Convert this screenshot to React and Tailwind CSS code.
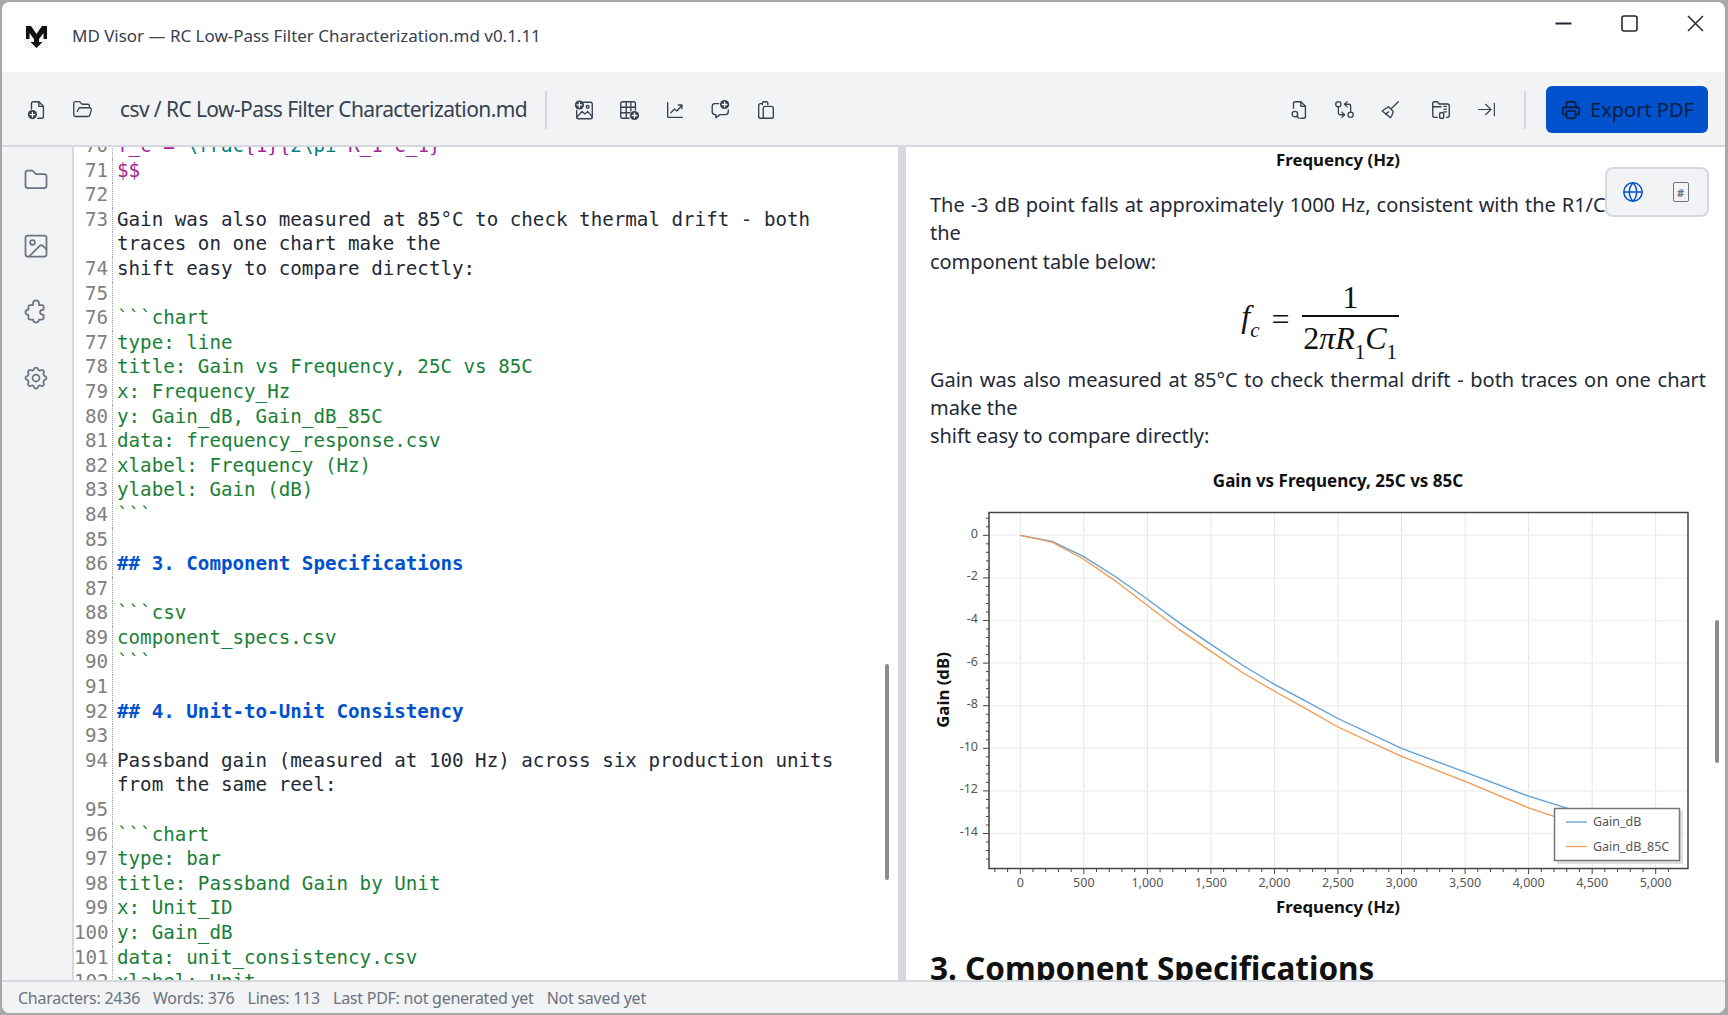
import { ArrowRightToLine, FolderOpen, GitCompareArrows, Globe, Image } from "lucide-react";
import { TbFolder, TbPrinter, TbSettings } from "react-icons/tb";

const svgProps = {
    viewBox: "0 0 24 24",
    fill: "none",
    stroke: "currentColor",
    strokeWidth: 1.5,
    strokeLinecap: "round",
    strokeLinejoin: "round",
    className: "size-[22px]",
};

// filled circle with a white plus, used on several toolbar icons
function PlusBadge({ cx, cy }) {
    return (
        <>
            <circle cx={cx} cy={cy} r="5" fill="currentColor" stroke="none" />
            <path d={`M${cx - 2.5} ${cy}h5M${cx} ${cy - 2.5}v5`} stroke="#fff" strokeWidth="1.4" />
        </>
    );
}

function NewFileIcon() {
    return (
        <svg {...svgProps}>
            <path d="M6 11V5a2 2 0 0 1 2-2h6l5 5v11a2 2 0 0 1-2 2h-4" />
            <path d="M14 3v5h5" />
            <PlusBadge cx={7} cy={17} />
        </svg>
    );
}

function ImagePlusIcon() {
    return (
        <svg {...svgProps}>
            <path d="M11 3.5h8a2 2 0 0 1 2 2v14a2 2 0 0 1-2 2H6a2 2 0 0 1-2-2v-7" />
            <path d="M4 20l6-6.5 3 3 0 0 3-3 5 6" />
            <circle cx="16" cy="8.5" r="1.6" />
            <PlusBadge cx={7} cy={6.5} />
        </svg>
    );
}

function TablePlusIcon() {
    return (
        <svg {...svgProps}>
            <path d="M12 21H5a2 2 0 0 1-2-2V5a2 2 0 0 1 2-2h12a2 2 0 0 1 2 2v7" />
            <path d="M3 9h16M3 15h10M9 3v18M14 3v10" />
            <PlusBadge cx={18} cy={18} />
        </svg>
    );
}

function ChartUpIcon() {
    return (
        <svg {...svgProps}>
            <path d="M4 4v15a1 1 0 0 0 1 1h15" />
            <path d="M7.5 15l4-4 2.5 2 5.5-6" />
            <path d="M15.5 6.5h4v4" />
        </svg>
    );
}

function MessagePlusIcon() {
    return (
        <svg {...svgProps}>
            <path d="M10.5 5H6.5a3 3 0 0 0-3 3v6a3 3 0 0 0 3 3h1v3.5l4.5-3.500h6a3 3 0 0 0 3-3v-2" />
            <PlusBadge cx={17} cy={6} />
        </svg>
    );
}

function ClipboardIcon() {
    return (
        <svg {...svgProps}>
            <path d="M8 5H6a2 2 0 0 0-2 2v12a2 2 0 0 0 2 2h3" />
            <path d="M8 6V4.500A1.500 1.500 0 0 1 9.500 3h3A1.500 1.500 0 0 1 14 4.500V6" />
            <rect x="9" y="8" width="11" height="13" rx="2" />
        </svg>
    );
}

function FileSearchIcon() {
    return (
        <svg {...svgProps}>
            <path d="M6 10V5a2 2 0 0 1 2-2h6l5 5v11a2 2 0 0 1-2 2h-3" />
            <path d="M14 3v5h5" />
            <circle cx="7.500" cy="16.500" r="3" />
            <path d="M10 19l2 2" />
        </svg>
    );
}

function BroomIcon() {
    return (
        <svg {...svgProps}>
            <path d="M21 3l-7.500 7.500" />
            <path d="M10.500 8.500l5 5c-.5 2.500-1.500 5-3 7L3.500 13c2.500-2 5-3.500 7-4.500z" />
            <path d="M7.500 16.500l3-2.500" />
        </svg>
    );
}

function FolderZipIcon() {
    return (
        <svg {...svgProps}>
            <path d="M8 20H5a2 2 0 0 1-2-2V5a2 2 0 0 1 2-2h3l2 2.500h9a2 2 0 0 1 2 2V18a2 2 0 0 1-2 2h-1" />
            <path d="M3 8.500h9" />
            <path d="M15 8h3M15 11h3M15 14h3" strokeWidth="1.200" />
            <rect x="10.500" y="15" width="4.500" height="6" rx="1" />
        </svg>
    );
}

function PuzzleIcon() {
    return (
        <svg {...svgProps} className="size-[28px]">
            <path d="M12 2a2.500 2.500 0 0 1 2.500 2.500V6H17a1.500 1.500 0 0 1 1.500 1.500V10c-2 0-3 .8-3 2.200s1 2.200 3 2.200V17a1.500 1.500 0 0 1-1.500 1.500h-2.500a2.500 2.500 0 0 1-5 0H7A1.500 1.500 0 0 1 5.500 17v-2.500c-1.500 0-2.500-1-2.500-2.200S4 10 5.500 10V7.500A1.500 1.500 0 0 1 7 6h2.500V4.500A2.500 2.500 0 0 1 12 2z" />
        </svg>
    );
}

function Logo() {
    return (
        <svg viewBox="0 0 23 23" className="size-[23px] bg-[#f4f4f4]">
            <path d="M1 1h5l5.500 8L17 1h5v13h-3.500V8L14 14v3h3.500l-6 6-6-6H9v-3L4.500 8v6H1z" fill="#111" />
        </svg>
    );
}

function ToolButton({ children }) {
    return <button className="flex h-[46px] w-[45.500px] items-center justify-center text-[#374151]">{children}</button>;
}

// syntax colours of the editor
const P = "text-[#a0279a]";
const T = "text-[#00807a]";
const G = "text-[#1a7f37]";
const H = "font-bold text-[#0052cc]";

const lines = [
    {
        n: 70,
        c: (
            <>
                <span className={P}>f_c = </span>
                <span className={T}>\frac</span>
                <span className={P}>{"{1}{"}</span>
                <span className={T}>2\pi</span>
                <span className={P}> R_1 C_1{"}"}</span>
            </>
        ),
    },
    { n: 71, c: <span className={P}>$$</span> },
    { n: 72, c: "" },
    { n: 73, c: "Gain was also measured at 85°C to check thermal drift - both" },
    { n: "", c: "traces on one chart make the" },
    { n: 74, c: "shift easy to compare directly:" },
    { n: 75, c: "" },
    { n: 76, c: <span className={G}>```chart</span> },
    { n: 77, c: <span className={G}>type: line</span> },
    { n: 78, c: <span className={G}>title: Gain vs Frequency, 25C vs 85C</span> },
    { n: 79, c: <span className={G}>x: Frequency_Hz</span> },
    { n: 80, c: <span className={G}>y: Gain_dB, Gain_dB_85C</span> },
    { n: 81, c: <span className={G}>data: frequency_response.csv</span> },
    { n: 82, c: <span className={G}>xlabel: Frequency (Hz)</span> },
    { n: 83, c: <span className={G}>ylabel: Gain (dB)</span> },
    { n: 84, c: <span className={G}>```</span> },
    { n: 85, c: "" },
    { n: 86, c: <span className={H}>## 3. Component Specifications</span> },
    { n: 87, c: "" },
    { n: 88, c: <span className={G}>```csv</span> },
    { n: 89, c: <span className={G}>component_specs.csv</span> },
    { n: 90, c: <span className={G}>```</span> },
    { n: 91, c: "" },
    { n: 92, c: <span className={H}>## 4. Unit-to-Unit Consistency</span> },
    { n: 93, c: "" },
    { n: 94, c: "Passband gain (measured at 100 Hz) across six production units" },
    { n: "", c: "from the same reel:" },
    { n: 95, c: "" },
    { n: 96, c: <span className={G}>```chart</span> },
    { n: 97, c: <span className={G}>type: bar</span> },
    { n: 98, c: <span className={G}>title: Passband Gain by Unit</span> },
    { n: 99, c: <span className={G}>x: Unit_ID</span> },
    { n: 100, c: <span className={G}>y: Gain_dB</span> },
    { n: 101, c: <span className={G}>data: unit_consistency.csv</span> },
    { n: 102, c: <span className={G}>xlabel: Unit</span> },
];

const blue = [[0, 0], [250, -0.28], [500, -1], [750, -1.95], [1000, -3], [1250, -4.1], [1500, -5.12], [1750, -6.1], [2000, -7], [2250, -7.8], [2500, -8.6], [3000, -10], [3500, -11.12], [4000, -12.25], [4400, -13]];
const orange = [[0, 0], [250, -0.32], [500, -1.12], [750, -2.15], [1000, -3.3], [1250, -4.42], [1500, -5.45], [1750, -6.45], [2000, -7.32], [2250, -8.15], [2500, -9], [3000, -10.38], [3500, -11.55], [4000, -12.8], [4300, -13.4]];

const px = (f) => 1020.3 + (f / 500) * 63.54;
const py = (g) => 534.3 - g * 21.3;
const toPoints = (data) => data.map(([f, g]) => `${px(f).toFixed(1)},${py(g).toFixed(1)}`).join(" ");

const xMajor = [0, 500, 1000, 1500, 2000, 2500, 3000, 3500, 4000, 4500, 5000];
const yMajor = [0, -2, -4, -6, -8, -10, -12, -14];
const xMinor = Array.from({ length: 54 }, (_, i) => i * 100 - 200).filter((f) => f % 500 !== 0);
const yMinor = Array.from({ length: 41 }, (_, i) => 0.8 - i * 0.4).filter((g) => Math.abs(g % 2) > 0.01 && Math.abs(g % 2) < 1.99);

function GainChart() {
    return (
        <svg viewBox="930 465 776 460" className="mt-[15px] block h-[460px] w-[776px]" style={{ fontFamily: "'Noto Sans', sans-serif" }}>
            <text x="1338" y="486" textAnchor="middle" fontSize="17" fontWeight="700" fill="#111">Gain vs Frequency, 25C vs 85C</text>
            {xMajor.map((f) => (
                <line key={f} x1={px(f)} x2={px(f)} y1="512" y2="867" stroke="#e6e6e6" />
            ))}
            {yMajor.map((g) => (
                <line key={g} x1="989" x2="1688" y1={py(g)} y2={py(g)} stroke="#f0f0f0" strokeWidth="1.500" />
            ))}
            <rect x="989" y="511.500" width="699" height="356" fill="none" stroke="#444" strokeWidth="1.500" />
            {xMajor.map((f) => (
                <g key={f}>
                    <line x1={px(f)} x2={px(f)} y1="868" y2="873" stroke="#444" />
                    <text x={px(f)} y="886" textAnchor="middle" fontSize="12.500" fill="#555">{f.toLocaleString("en-US")}</text>
                </g>
            ))}
            {xMinor.map((f) => (
                <line key={f} x1={px(f)} x2={px(f)} y1="868" y2="871" stroke="#444" />
            ))}
            {yMajor.map((g) => (
                <g key={g}>
                    <line x1="983" x2="989" y1={py(g)} y2={py(g)} stroke="#444" />
                    <text x="978" y={py(g) + 2.500} textAnchor="end" fontSize="12.500" fill="#555">{g}</text>
                </g>
            ))}
            {yMinor.map((g) => (
                <line key={g} x1="986" x2="989" y1={py(g)} y2={py(g)} stroke="#444" />
            ))}
            <polyline points={toPoints(blue)} fill="none" stroke="#5c9fd6" strokeWidth="1.300" />
            <polyline points={toPoints(orange)} fill="none" stroke="#f29a50" strokeWidth="1.300" />
            <rect x="1557" y="810" width="126" height="53" fill="#e0e0e0" />
            <rect x="1554.500" y="807.500" width="125" height="52" fill="#fff" stroke="#777" strokeWidth="1.500" />
            <line x1="1566" x2="1587" y1="821" y2="821" stroke="#5c9fd6" strokeWidth="1.300" />
            <line x1="1566" x2="1587" y1="845.500" y2="845.500" stroke="#f29a50" strokeWidth="1.300" />
            <text x="1593" y="825" fontSize="12.500" fill="#555">Gain_dB</text>
            <text x="1593" y="850" fontSize="12.500" fill="#555">Gain_dB_85C</text>
            <text x="1338" y="912" textAnchor="middle" fontSize="16.800" fontWeight="700" fill="#111">Frequency (Hz)</text>
            <text transform="translate(949 689) rotate(-90)" textAnchor="middle" fontSize="16.800" fontWeight="700" fill="#111">Gain (dB)</text>
        </svg>
    );
}

function Formula() {
    return (
        <div className="mt-[3px] flex h-[80px] items-center justify-center gap-[12px] pl-[4px] font-['Liberation_Serif',serif] text-[32px] text-[#111]">
            <span className="italic">
                f<sub className="text-[21px] align-[-5px] leading-none">c</sub>
            </span>
            <span>=</span>
            <div className="flex w-[97px] flex-col items-center">
                <span className="leading-[36px]">1</span>
                <div className="h-[1.500px] w-full bg-[#111]" />
                <span className="leading-[42px] whitespace-nowrap">
                    2<span className="italic">πR</span>
                    <sub className="text-[21px] align-[-5px] leading-none">1</sub>
                    <span className="italic">C</span>
                    <sub className="text-[21px] align-[-5px] leading-none">1</sub>
                </span>
            </div>
        </div>
    );
}

function App() {
    return (
        <div className="h-screen bg-[#a8a8a8] pt-[2px] pr-[3px] pb-[2px] pl-[2px] font-['Noto_Sans',sans-serif]">
            <div className="flex h-full flex-col overflow-hidden rounded-lg bg-white">
                {/* title bar */}
                <div className="flex h-[70px] shrink-0 justify-between bg-white">
                    <div className="flex items-center pb-[2px] pl-[23px]">
                        <Logo />
                        <span className="ml-[24px] whitespace-nowrap text-[17px] tracking-[-0.02px] text-[#374151]">
                            MD Visor — RC Low-Pass Filter Characterization.md v0.1.11
                        </span>
                    </div>
                    <div className="flex items-start gap-[49px] pt-[13px] pr-[21px] text-[#1f2937]">
                        <svg viewBox="0 0 17 17" className="size-[17px]"><path d="M0.500 8.500h16" stroke="currentColor" strokeWidth="2" /></svg>
                        <svg viewBox="0 0 17 17" className="size-[17px]"><rect x="1" y="1" width="15" height="15" rx="2" fill="none" stroke="currentColor" strokeWidth="1.600" /></svg>
                        <svg viewBox="0 0 17 17" className="size-[17px]"><path d="M1 1l15 15M16 1L1 16" stroke="currentColor" strokeWidth="1.500" /></svg>
                    </div>
                </div>

                {/* toolbar */}
                <div className="flex h-[75px] shrink-0 items-center border-b-2 border-[#d5d8df] bg-[#f2f3f5] pt-[2px] pl-[12px]">
                    <ToolButton><NewFileIcon /></ToolButton>
                    <ToolButton><FolderOpen size={21} strokeWidth={1.500} /></ToolButton>
                    <span className="ml-[15px] whitespace-nowrap text-[21px] tracking-[-0.6px] text-[#374151]">
                        csv / RC Low-Pass Filter Characterization.md
                    </span>
                    <div className="ml-[18px] h-[38px] w-[2px] bg-[#d5d8df]" />
                    <div className="ml-[14px] flex">
                        <ToolButton><ImagePlusIcon /></ToolButton>
                        <ToolButton><TablePlusIcon /></ToolButton>
                        <ToolButton><ChartUpIcon /></ToolButton>
                        <ToolButton><MessagePlusIcon /></ToolButton>
                        <ToolButton><ClipboardIcon /></ToolButton>
                    </div>
                    <div className="ml-auto flex items-center pr-[17px]">
                        <ToolButton><FileSearchIcon /></ToolButton>
                        <ToolButton><GitCompareArrows size={21} strokeWidth={1.500} /></ToolButton>
                        <ToolButton><BroomIcon /></ToolButton>
                        <div className="w-[5px]" />
                        <ToolButton><FolderZipIcon /></ToolButton>
                        <ToolButton><ArrowRightToLine size={21} strokeWidth={1.300} /></ToolButton>
                        <div className="ml-[15px] h-[38px] w-[2px] bg-[#d5d8df]" />
                        <button className="ml-[20px] flex h-[47px] w-[162px] items-center justify-center gap-[8px] rounded-md bg-[#0052cc] text-[20px] text-[#0a1f44]">
                            <TbPrinter size={22} />
                            Export PDF
                        </button>
                    </div>
                </div>

                {/* body */}
                <div className="flex min-h-0 flex-1">
                    <div className="flex w-[72px] shrink-0 flex-col items-center gap-[38px] border-r-2 border-[#d5d8df] bg-[#f2f3f5] pt-[19px] pr-[2px] text-[#6b7280]">
                        <TbFolder size={28} strokeWidth={1.500} />
                        <Image size={28} strokeWidth={1.500} />
                        <PuzzleIcon />
                        <TbSettings size={28} strokeWidth={1.500} />
                    </div>

                    <div className="relative w-[824px] shrink-0 overflow-hidden bg-white">
                        <div className="-mt-[13px] font-['DejaVu_Sans_Mono',monospace] text-[19.200px] leading-[24.600px] text-[#1f2937]">
                            {lines.map((line, i) => (
                                <div key={i} className="flex h-[24.600px]">
                                    <div className="w-[39px] shrink-0 border-r border-dotted border-[#9ca3af] pr-[4px] text-right text-[#808080]">
                                        {line.n}
                                    </div>
                                    <div className="pl-[4px] whitespace-pre">{line.c}</div>
                                </div>
                            ))}
                        </div>
                        <div className="absolute top-[517px] left-[811px] h-[216px] w-[4px] rounded-full bg-[#8c8c8c]" />
                    </div>

                    <div className="w-[8px] shrink-0 bg-[#d5d8df]" />

                    <div className="relative min-w-0 flex-1 overflow-hidden bg-white pl-[24px] text-[20px] leading-[28.300px] text-[#1f2937]">
                        <div className="w-[776px]">
                            <div className="h-[26px] pl-[40px] text-center text-[16.800px] leading-[26px] font-bold text-[#111]">Frequency (Hz)</div>
                            <p className="mt-[18px] text-justify tracking-[-0.05px]">
                                The -3 dB point falls at approximately 1000 Hz, consistent with the R1/C1 values in the
                                <br />
                                component table below:
                            </p>
                            <Formula />
                            <p className="mt-[7px] text-justify tracking-[-0.05px]">
                                Gain was also measured at 85°C to check thermal drift - both traces on one chart make the
                                <br />
                                shift easy to compare directly:
                            </p>
                            <GainChart />
                            <h2 className="mt-[20px] text-[31.500px] leading-[44px] font-bold whitespace-nowrap text-[#111]">3. Component Specifications</h2>
                        </div>
                        <div className="absolute top-[20px] right-[16px] flex h-[50px] w-[104px] items-center justify-center gap-[29px] rounded-lg border-2 border-[#d5d8df] bg-[#f2f3f5] pr-[4px]">
                            <Globe size={22} strokeWidth={1.600} className="text-[#0052cc]" />
                            <div className="flex h-[20px] w-[16px] items-center justify-center rounded-[2px] border-[1.500px] border-[#6b7280] text-[11px] leading-none font-bold text-[#6b7280]">#</div>
                        </div>
                        <div className="absolute top-[473px] right-[6px] h-[143px] w-[4px] rounded-full bg-[#8c8c8c]" />
                    </div>
                </div>

                {/* status bar */}
                <div className="flex h-[33px] shrink-0 items-center gap-[13px] border-t-2 border-[#d5d8df] bg-[#f2f3f5] pl-[16px] text-[16px] tracking-[-0.25px] whitespace-nowrap text-[#6b7280]">
                    <span>Characters: 2436</span>
                    <span>Words: 376</span>
                    <span>Lines: 113</span>
                    <span>Last PDF: not generated yet</span>
                    <span>Not saved yet</span>
                </div>
            </div>
        </div>
    );
}

export default App;
